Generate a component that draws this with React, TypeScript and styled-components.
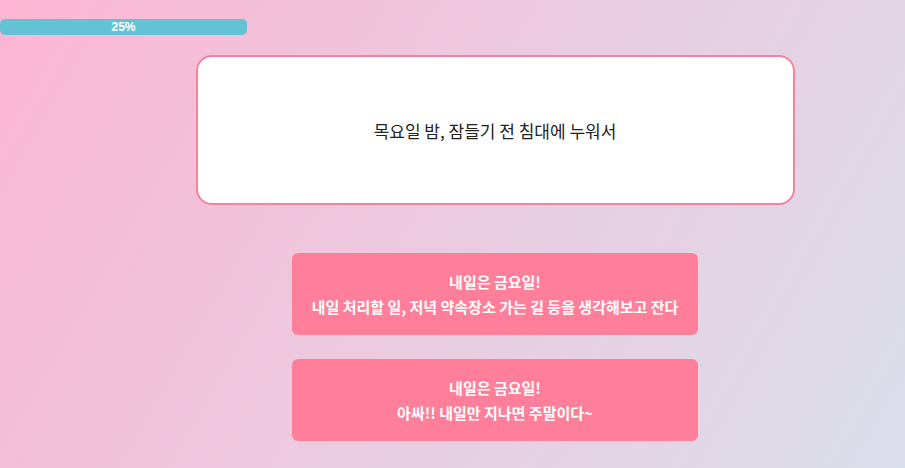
import React from 'react';
import styled, { createGlobalStyle } from 'styled-components';

const GlobalStyle = createGlobalStyle`
  html, body {
    margin: 0;
    padding: 0;
  }
  body {
    font-family: "Noto Sans CJK KR", "Noto Sans", sans-serif;
  }
`;

const answers = [
  ['내일은 금요일!', '내일 처리할 일, 저녁 약속장소 가는 길 등을 생각해보고 잔다'],
  ['내일은 금요일!', '아싸!! 내일만 지나면 주말이다~'],
];

function App() {
  const percent = 25;

  return (
    <Page>
      <GlobalStyle />
      <ProgressBar>{percent}%</ProgressBar>
      <Main>
        <QuestionCard>목요일 밤, 잠들기 전 침대에 누워서</QuestionCard>
        <AnswerList>
          {answers.map((lines, i) => (
            <AnswerButton key={i}>
              {lines.map((line, j) => (
                <span key={j}>{line}</span>
              ))}
            </AnswerButton>
          ))}
        </AnswerList>
      </Main>
    </Page>
  );
}

export default App;

const Page = styled.div`
  box-sizing: border-box;
  width: 100%;
  min-height: 100vh;
  padding-top: 19px;
  overflow: hidden;
  background: linear-gradient(120deg, #fcb5d2 0%, #ebcbe0 50%, #dadeea 100%);
`;

const ProgressBar = styled.div`
  display: flex;
  justify-content: center;
  align-items: center;

  width: 247px;
  height: 16px;
  border-radius: 5px;
  background: #63c3d5;

  color: #fff;
  font-family: "Liberation Sans", Arial, sans-serif;
  font-size: 12px;
  font-weight: 700;
`;

const Main = styled.main`
  display: flex;
  flex-direction: column;
  align-items: center;

  padding-top: 20px;
  padding-left: 85px;
`;

const QuestionCard = styled.div`
  box-sizing: border-box;
  display: flex;
  justify-content: center;
  align-items: center;

  width: 599px;
  height: 150px;

  border: 2px solid #f6839c;
  border-radius: 16px;
  background: #fff;

  color: #222;
  font-size: 17px;
`;

const AnswerList = styled.div`
  display: flex;
  flex-direction: column;
  gap: 24px;

  margin-top: 48px;
`;

const AnswerButton = styled.button`
  display: flex;
  flex-direction: column;
  justify-content: center;
  align-items: center;

  width: 406px;
  height: 82px;
  padding: 0;

  border: none;
  border-radius: 6px;
  background: #ff7f9a;

  color: #fff;
  font-family: "Noto Sans CJK KR", "Noto Sans", sans-serif;
  font-size: 15px;
  font-weight: 700;
  line-height: 25px;
  cursor: pointer;
`;
